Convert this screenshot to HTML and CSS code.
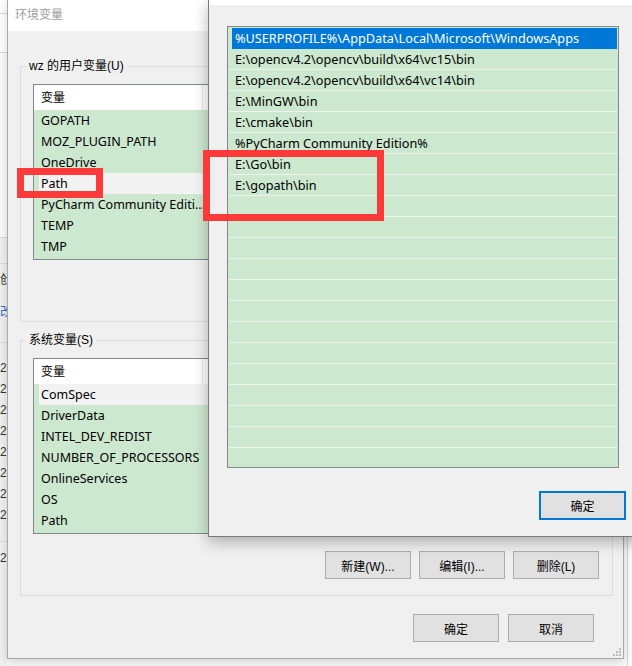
FILE: index.html
```html
<!DOCTYPE html>
<html>

<head>
  <title>环境变量</title>
  <link rel="stylesheet" href="styles.css">
</head>

<body>
  <!-- window behind, left edge -->
  <div class="back-window">
    <div class="back-row back-top"></div>
    <div class="back-row back-tab"></div>
    <div class="back-row back-pane"></div>
    <div class="back-row back-gap"></div>
    <div class="back-text">戗</div>
    <div class="back-text back-link">改</div>
    <div class="back-row back-split"></div>
    <div class="back-dates">
      <div>2</div><div>2</div><div>2</div><div>2</div>
      <div>2</div><div>2</div><div>2</div><div>2</div>
    </div>
    <div class="back-row back-split2"></div>
    <div class="back-text">2</div>
  </div>
  <div class="back-right"></div>

  <!-- 环境变量 -->
  <div class="window env-window">
    <div class="titlebar">环境变量</div>
    <div class="window-body">
      <div class="group user-group">
        <div class="group-title">wz 的用户变量(U)</div>
        <div class="listbox">
          <div class="list-header"><span class="col-name">变量</span><span class="col-value"></span></div>
          <div class="list-row">GOPATH</div>
          <div class="list-row">MOZ_PLUGIN_PATH</div>
          <div class="list-row">OneDrive</div>
          <div class="list-row current">Path</div>
          <div class="list-row">PyCharm Community Editi...</div>
          <div class="list-row">TEMP</div>
          <div class="list-row">TMP</div>
        </div>
      </div>

      <div class="group system-group">
        <div class="group-title">系统变量(S)</div>
        <div class="listbox">
          <div class="list-header"><span class="col-name">变量</span><span class="col-value"></span></div>
          <div class="list-row current">ComSpec</div>
          <div class="list-row">DriverData</div>
          <div class="list-row">INTEL_DEV_REDIST</div>
          <div class="list-row">NUMBER_OF_PROCESSORS</div>
          <div class="list-row">OnlineServices</div>
          <div class="list-row">OS</div>
          <div class="list-row">Path</div>
        </div>
        <div class="group-buttons">
          <button class="btn">新建(W)...</button>
          <button class="btn">编辑(I)...</button>
          <button class="btn">删除(L)</button>
        </div>
      </div>

      <div class="dialog-buttons">
        <button class="btn">确定</button>
        <button class="btn">取消</button>
      </div>
    </div>
    <svg class="grip" width="8" height="8" viewBox="0 0 8 8">
      <rect x="6" y="0" width="2" height="2" fill="#bcbcbc" />
      <rect x="3" y="3" width="2" height="2" fill="#bcbcbc" />
      <rect x="6" y="3" width="2" height="2" fill="#bcbcbc" />
      <rect x="0" y="6" width="2" height="2" fill="#bcbcbc" />
      <rect x="3" y="6" width="2" height="2" fill="#bcbcbc" />
      <rect x="6" y="6" width="2" height="2" fill="#bcbcbc" />
    </svg>
  </div>

  <!-- 编辑环境变量 -->
  <div class="window edit-window">
    <div class="titlebar"></div>
    <div class="window-body">
      <div class="path-list">
        <div class="path-row selected">%USERPROFILE%\AppData\Local\Microsoft\WindowsApps</div>
        <div class="path-row">E:\opencv4.2\opencv\build\x64\vc15\bin</div>
        <div class="path-row">E:\opencv4.2\opencv\build\x64\vc14\bin</div>
        <div class="path-row">E:\MinGW\bin</div>
        <div class="path-row">E:\cmake\bin</div>
        <div class="path-row">%PyCharm Community Edition%</div>
        <div class="path-row">E:\Go\bin</div>
        <div class="path-row">E:\gopath\bin</div>
        <div class="path-row"></div>
        <div class="path-row"></div>
        <div class="path-row"></div>
        <div class="path-row"></div>
        <div class="path-row"></div>
        <div class="path-row"></div>
        <div class="path-row"></div>
        <div class="path-row"></div>
        <div class="path-row"></div>
        <div class="path-row"></div>
        <div class="path-row"></div>
        <div class="path-row"></div>
        <div class="path-row"></div>
      </div>
      <div class="edit-footer">
        <button class="btn default">确定</button>
      </div>
    </div>
  </div>

  <!-- red marks -->
  <div class="mark mark-user"></div>
  <div class="mark mark-paths"></div>
</body>

</html>
```

FILE: styles.css
```css
body {
  margin: 0;
  width: 632px;
  height: 666px;
  overflow: hidden;
  position: relative;
  background-color: #fafafa;
  font-family: "Liberation Sans", "Noto Sans CJK SC", sans-serif;
  font-size: 12px;
  color: #000;
}

/* windows behind */
.back-window {
  position: absolute;
  left: 0;
  top: 0;
  width: 7px;
  height: 666px;
  overflow: hidden;
  background-color: #f0f0f0;
  color: #333;
}

.back-row {
  border-bottom: 1px solid #dadada;
}

.back-top {
  height: 13px;
  background-color: #fff;
}

.back-tab {
  height: 38px;
  background-color: #fff;
}

.back-pane {
  height: 184px;
  background-color: #fafafa;
}

.back-gap {
  height: 25px;
}

.back-text {
  height: 32px;
  line-height: 32px;
  white-space: nowrap;
}

.back-link {
  color: #2f6fc0;
}

.back-split {
  height: 14px;
}

.back-dates {
  padding-top: 15px;
}

.back-dates div {
  height: 21px;
  line-height: 21px;
}

.back-split2 {
  height: 15px;
}

.back-right {
  position: absolute;
  left: 627px;
  top: 0;
  width: 5px;
  height: 666px;
  border-left: 1px solid #d8d8d8;
  background-color: #fbfbfb;
}

/* window shells */
.window {
  position: absolute;
  box-sizing: border-box;
  background-color: #f0f0f0;
  display: flex;
  flex-direction: column;
}

.titlebar {
  background-color: #fff;
}

.window-body {
  flex: 1;
  display: flex;
  flex-direction: column;
}

.env-window {
  left: 7px;
  top: 0;
  width: 617px;
  height: 659px;
  border: 1px solid #a8a8a8;
  border-top: none;
  box-shadow: 0 3px 10px rgba(0, 0, 0, 0.16);
}

.env-window .titlebar {
  height: 31px;
  padding-left: 7px;
  line-height: 30px;
  color: #a0a0a0;
}

.env-window .window-body {
  padding: 0 10px 0 12px;
}

.grip {
  position: absolute;
  right: 2px;
  bottom: 2px;
}

/* group boxes */
.group {
  box-sizing: border-box;
  height: 256px;
  border: 1px solid #dcdcdc;
  display: flex;
  flex-direction: column;
}

.user-group {
  margin-top: 35px;
}

.system-group {
  margin-top: 18px;
}

.group-title {
  align-self: flex-start;
  margin: -9px 0 0 5px;
  padding: 0 3px;
  line-height: 16px;
  background-color: #f0f0f0;
}

.listbox {
  box-sizing: border-box;
  height: 176px;
  margin: 10px 11px 0 12px;
  border: 1px solid #828790;
  padding-bottom: 2px;
  background-color: #cce8cf;
  overflow: hidden;
  font-family: "Noto Sans", "Noto Sans CJK SC", sans-serif;
  font-size: 12.5px;
}

.list-header {
  display: flex;
  height: 25px;
  line-height: 25px;
  background-color: #fff;
  font-size: 12px;
}

.col-name {
  box-sizing: border-box;
  width: 169px;
  padding-left: 7px;
  border-right: 1px solid #e5e5e5;
}

.list-row {
  height: 21px;
  line-height: 22px;
  padding-left: 7px;
  white-space: nowrap;
}

.list-row.current {
  margin-left: 5px;
  padding-left: 2px;
  background-color: #f3f3f3;
}

/* buttons */
.btn {
  box-sizing: border-box;
  width: 86px;
  height: 28px;
  padding: 0;
  border: 1px solid #adadad;
  background-color: #e1e1e1;
  font: inherit;
  color: #000;
}

.group-buttons {
  display: flex;
  justify-content: flex-end;
  gap: 8px;
  margin: 17px 13px 0 0;
}

.dialog-buttons {
  display: flex;
  justify-content: flex-end;
  gap: 9px;
  margin: 18px 19px 0 0;
}

/* edit dialog */
.edit-window {
  left: 208px;
  top: 0;
  width: 440px;
  height: 537px;
  border-left: 1px solid #7c7c7c;
  border-bottom: 1px solid #7c7c7c;
  box-shadow: 0 5px 14px rgba(0, 0, 0, 0.28);
}

.edit-window .titlebar {
  height: 5px;
}

.edit-window .window-body {
  padding: 21px 0 0 18px;
}

.path-list {
  box-sizing: border-box;
  width: 392px;
  height: 442px;
  border: 1px solid #828790;
  padding: 1px;
  background-color: #cce8cf;
  overflow: hidden;
  font-family: "Noto Sans", "Noto Sans CJK SC", sans-serif;
  font-size: 12.7px;
}

.path-row {
  height: 20px;
  line-height: 21px;
  padding-left: 6px;
  border-bottom: 1px solid #eef3ee;
  white-space: nowrap;
}

.path-row.selected {
  margin-left: 3px;
  padding-left: 3px;
  background-color: #0078d7;
  border-bottom-color: #0078d7;
  color: #fff;
}

.edit-footer {
  padding: 23px 0 0 312px;
}

.btn.default {
  width: 87px;
  height: 29px;
  border: 2px solid #0078d7;
}

/* red marks */
.mark {
  position: absolute;
  box-sizing: border-box;
  border: 7px solid #fc3a3a;
}

.mark-user {
  left: 17px;
  top: 168px;
  width: 86px;
  height: 30px;
}

.mark-paths {
  left: 203px;
  top: 150px;
  width: 181px;
  height: 71px;
}
```
